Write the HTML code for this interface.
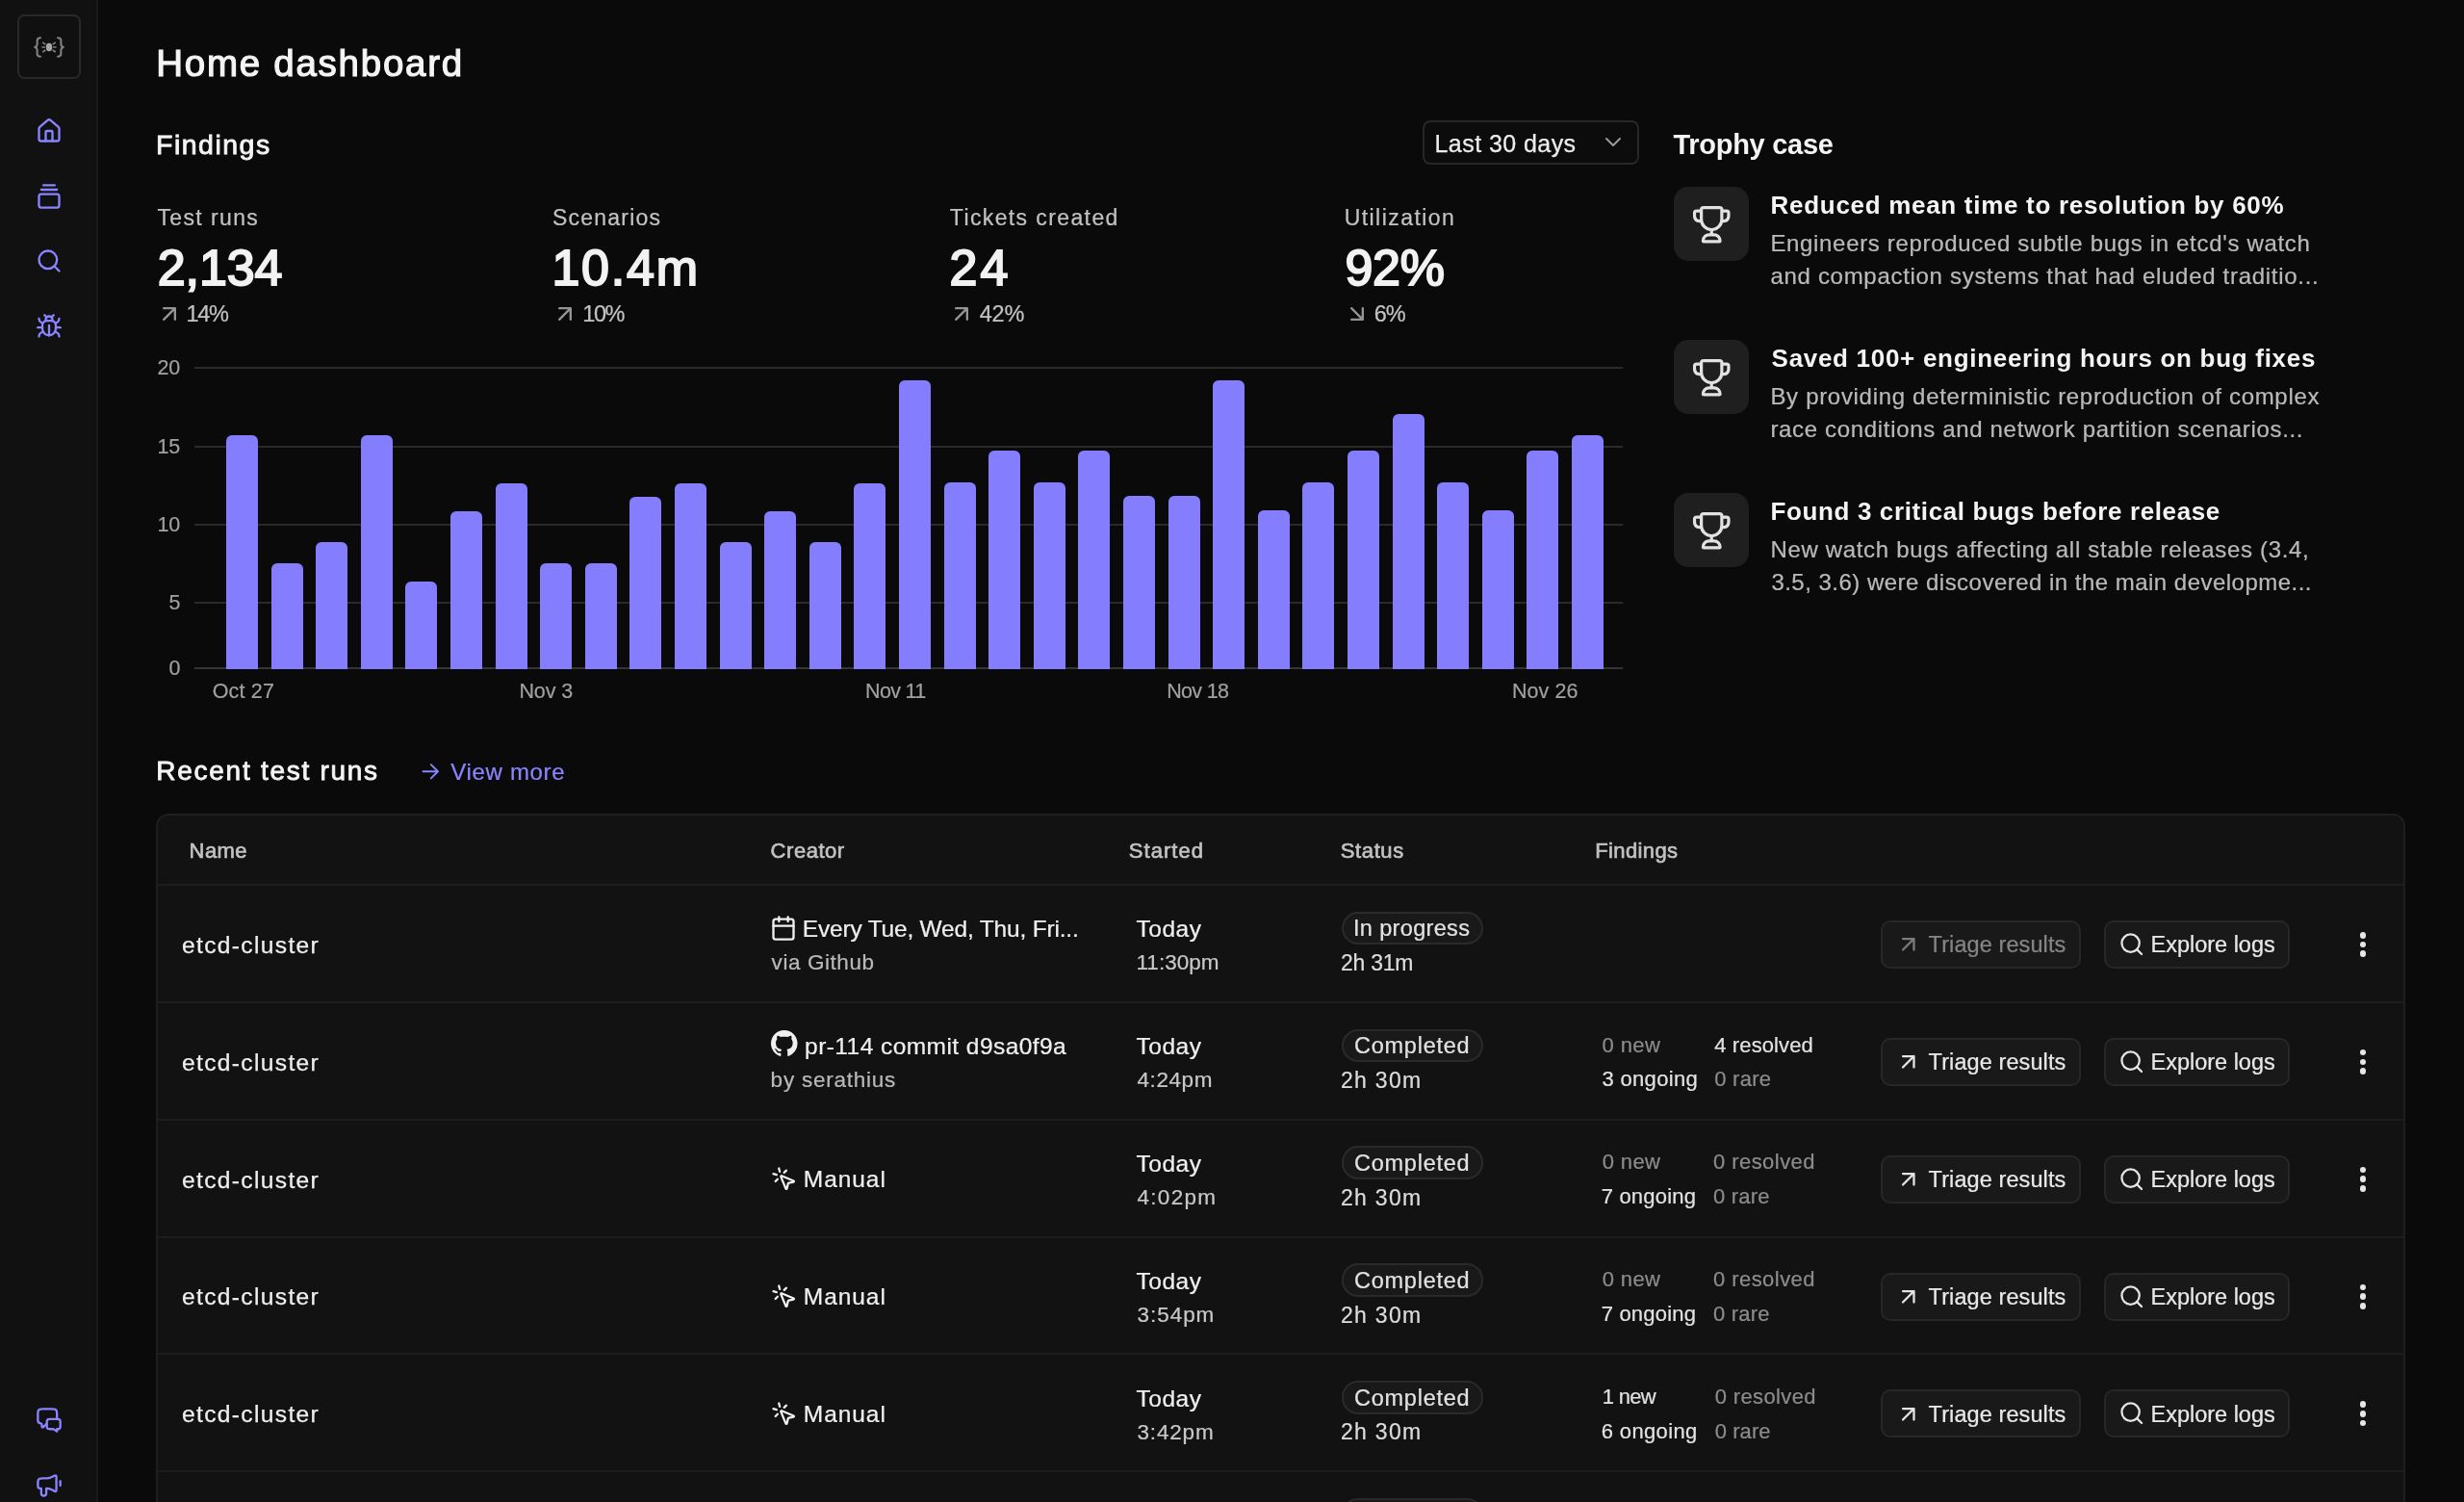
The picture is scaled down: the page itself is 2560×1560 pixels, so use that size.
<!DOCTYPE html>
<html lang="en"><head><meta charset="utf-8"><title>Home dashboard</title>
<style>
*{box-sizing:border-box;margin:0;padding:0}
html,body{width:2560px;height:1560px;overflow:hidden;background:#0a0a0a}
body{font-family:"Liberation Sans",sans-serif;position:relative;color:#f0f0f0}
.t{position:absolute;white-space:nowrap;font-weight:400}
.abs{position:absolute}
svg{position:absolute;overflow:visible}
.ic{fill:none;stroke-linecap:round;stroke-linejoin:round}
.side{position:absolute;left:0;top:0;width:102px;height:1560px;background:#111111;border-right:2px solid #191919}
.logo{position:absolute;left:18px;top:15px;width:66px;height:67px;border:2px solid #292929;border-radius:7.5px;background:#101010}
.dd{position:absolute;left:1478px;top:125px;width:225px;height:46px;border:2px solid #272727;border-radius:8px;background:#0c0c0c}
.tbox{position:absolute;left:1739px;width:77.5px;height:77px;border-radius:15px;background:#1f1f1f}
.table{position:absolute;left:162px;top:845px;width:2337px;height:760px;border:2px solid #1e1e1e;border-radius:13px;background:#121212}
.hr{position:absolute;left:164px;width:2333px;height:2px;background:#1d1d1d}
.pill{position:absolute;left:1393.5px;width:147px;height:34.5px;border:2px solid #2a2a2a;border-radius:17px;background:#191919}
.btn{position:absolute;height:50px;border:2px solid #272727;border-radius:10px;background:#191919}
.gl{position:absolute;left:202px;width:1484px;height:2px;background:#2a2a2a}
.bar{position:absolute;width:33px;background:#847dfe;border-radius:6px 6px 0 0}
</style></head><body><div id="root" style="position:absolute;left:0;top:0;width:2560px;height:1560px;will-change:transform">

<div class="side"></div><div class="logo"></div>
<svg style="left:34px;top:35.600px" width="34" height="26.440" viewBox="0 0 36 28" class="ic" stroke="#808080" stroke-width="2.2">
<path d="M8.5 3.5c-2.6 0-3.6 1-3.6 3.2v3.6c0 1.9-.8 3-2.6 3.5 1.8.5 2.6 1.6 2.6 3.5v3.6c0 2.2 1 3.2 3.6 3.2"/>
<path d="M27.5 3.5c2.6 0 3.6 1 3.6 3.2v3.6c0 1.9.8 3 2.6 3.5-1.8.5-2.6 1.6-2.6 3.5v3.6c0 2.2-1 3.2-3.6 3.2"/>
<ellipse cx="18" cy="13.8" rx="3.4" ry="4.6" fill="#a8a8a8" stroke="none"/>
<path d="M13.2 13.8h-2.6M22.8 13.8h2.6M13.6 10.4l-2.2-1.6M22.4 10.4l2.2-1.6M13.6 17.2l-2.2 1.6M22.4 17.2l2.2 1.6" stroke-width="1.7"/>
</svg>
<svg style="left:37.0px;top:122.0px" width="28" height="28" viewBox="0 0 24 24" class="ic" stroke="#8a84ff" stroke-width="2"><path d="M15 21v-8a1 1 0 0 0-1-1h-4a1 1 0 0 0-1 1v8"/><path d="M3 10a2 2 0 0 1 .709-1.528l7-5.999a2 2 0 0 1 2.582 0l7 5.999A2 2 0 0 1 21 10v9a2 2 0 0 1-2 2H5a2 2 0 0 1-2-2z"/></svg>
<svg style="left:37.0px;top:189.5px" width="28" height="28" viewBox="0 0 24 24" class="ic" stroke="#8a84ff" stroke-width="2"><path d="M7 2h10"/><path d="M5 6h14"/><rect width="18" height="12" x="3" y="10" rx="2"/></svg>
<svg style="left:37.0px;top:257.3px" width="28" height="28" viewBox="0 0 24 24" class="ic" stroke="#8a84ff" stroke-width="2"><circle cx="11" cy="11" r="8"/><path d="m21 21-4.3-4.3"/></svg>
<svg style="left:37.0px;top:324.8px" width="28" height="28" viewBox="0 0 24 24" class="ic" stroke="#8a84ff" stroke-width="2"><path d="m8 2 1.88 1.88"/><path d="M14.12 3.88 16 2"/><path d="M9 7.13v-1a3.003 3.003 0 1 1 6 0v1"/><path d="M12 20c-3.3 0-6-2.700-6-6v-3a4 4 0 0 1 4-4h4a4 4 0 0 1 4 4v3c0 3.300-2.700 6-6 6"/><path d="M12 20v-9"/><path d="M6.530 9C4.600 8.800 3 7.100 3 5"/><path d="M6 13H2"/><path d="M3 21c0-2.100 1.700-3.900 3.800-4"/><path d="M20.970 5c0 2.100-1.600 3.800-3.500 4"/><path d="M22 13h-4"/><path d="M17.200 17c2.100.1 3.800 1.900 3.800 4"/></svg>
<svg style="left:37.0px;top:1461.0px" width="28" height="28" viewBox="0 0 24 24" class="ic" stroke="#8a84ff" stroke-width="2"><path d="M10 15l-3.100 3.100c-.6.600-1.350.350-1.350-.550v-1.560c0-.550-.450-.950-.990-1.020A3 3 0 0 1 2 12V6.800C2 5.120 2 4.280 2.330 3.640a3 3 0 0 1 1.310-1.310C4.280 2 5.120 2 6.800 2h7.400c1.680 0 2.520 0 3.160.330a3 3 0 0 1 1.310 1.310C19 4.280 19 5.120 19 6.800V11"/><path d="M19 22l-2.180-1.510c-.300-.210-.460-.320-.620-.390a2 2 0 0 0-.460-.150c-.180-.030-.370-.030-.740-.030H13.200c-1.120 0-1.680 0-2.110-.220a2 2 0 0 1-.870-.870C10 18.390 10 17.830 10 16.710V14.200c0-1.120 0-1.680.220-2.110a2 2 0 0 1 .870-.870C11.520 11 12.080 11 13.200 11h5.600c1.120 0 1.680 0 2.110.220a2 2 0 0 1 .870.870c.220.430.220.990.220 2.110v2.710c0 .930 0 1.400-.150 1.770a2 2 0 0 1-1.080 1.080c-.370.150-.840.150-1.770.150V22z"/></svg>
<svg style="left:37.0px;top:1529.0px" width="28" height="28" viewBox="0 0 24 24" class="ic" stroke="#8a84ff" stroke-width="2"><path d="M22 8v4"/><path d="M10.250 5.500H6.800c-1.680 0-2.520 0-3.160.330a3 3 0 0 0-1.310 1.310C2 7.780 2 8.620 2 10.300v1.200c0 .930 0 1.400.150 1.770a2 2 0 0 0 1.080 1.080c.370.150.840.150 1.770.150v4.250c0 .230 0 .350.010.450a2 2 0 0 0 1.790 1.790c.100.010.220.010.450.010s.350 0 .450-.010a2 2 0 0 0 1.790-1.790c.010-.100.010-.220.010-.450V14.500h.750c1.770 0 3.930.950 5.600 1.860.970.530 1.460.800 1.780.760a.900.900 0 0 0 .700-.420c.170-.270.170-.810.170-1.890V5.190c0-1.080 0-1.620-.170-1.890a.900.900 0 0 0-.700-.420c-.320-.040-.810.230-1.780.760-1.670.910-3.830 1.860-5.600 1.860z"/></svg>
<div class="dd"></div>
<svg style="left:1664px;top:135.400px" width="24" height="24" viewBox="0 0 24 24" class="ic" stroke="#9a9a9a" stroke-width="2"><path d="M5 9l7 7 7-7"/></svg>
<svg style="left:162.0px;top:311.8px" width="28" height="28" viewBox="0 0 24 24" class="ic" stroke="#949494" stroke-width="2"><path d="M7 17L17 7M7 7h10v10"/></svg>
<svg style="left:573.4px;top:311.8px" width="28" height="28" viewBox="0 0 24 24" class="ic" stroke="#949494" stroke-width="2"><path d="M7 17L17 7M7 7h10v10"/></svg>
<svg style="left:984.6px;top:311.8px" width="28" height="28" viewBox="0 0 24 24" class="ic" stroke="#949494" stroke-width="2"><path d="M7 17L17 7M7 7h10v10"/></svg>
<svg style="left:1396.3px;top:311.8px" width="28" height="28" viewBox="0 0 24 24" class="ic" stroke="#949494" stroke-width="2"><path d="M7 7l10 10M17 7v10H7"/></svg>
<div class="gl" style="top:381.2px"></div>
<div class="gl" style="top:463.0px"></div>
<div class="gl" style="top:544.0px"></div>
<div class="gl" style="top:625.0px"></div>
<div class="gl" style="top:693px;background:#353535"></div>
<div class="bar" style="left:234.9px;top:452.4px;height:242.4px"></div>
<div class="bar" style="left:281.5px;top:585.1px;height:109.7px"></div>
<div class="bar" style="left:328.1px;top:562.9px;height:131.9px"></div>
<div class="bar" style="left:374.7px;top:452.4px;height:242.4px"></div>
<div class="bar" style="left:421.3px;top:603.6px;height:91.2px"></div>
<div class="bar" style="left:467.9px;top:530.5px;height:164.3px"></div>
<div class="bar" style="left:514.5px;top:501.8px;height:193.0px"></div>
<div class="bar" style="left:561.1px;top:585.1px;height:109.7px"></div>
<div class="bar" style="left:607.7px;top:585.1px;height:109.7px"></div>
<div class="bar" style="left:654.3px;top:515.7px;height:179.1px"></div>
<div class="bar" style="left:700.9px;top:501.8px;height:193.0px"></div>
<div class="bar" style="left:747.5px;top:562.9px;height:131.9px"></div>
<div class="bar" style="left:794.1px;top:530.5px;height:164.3px"></div>
<div class="bar" style="left:840.7px;top:562.9px;height:131.9px"></div>
<div class="bar" style="left:887.3px;top:501.8px;height:193.0px"></div>
<div class="bar" style="left:933.9px;top:394.8px;height:300.0px"></div>
<div class="bar" style="left:980.5px;top:501.3px;height:193.5px"></div>
<div class="bar" style="left:1027.1px;top:468.1px;height:226.7px"></div>
<div class="bar" style="left:1073.7px;top:501.3px;height:193.5px"></div>
<div class="bar" style="left:1120.3px;top:468.1px;height:226.7px"></div>
<div class="bar" style="left:1166.9px;top:515.2px;height:179.6px"></div>
<div class="bar" style="left:1213.5px;top:515.2px;height:179.6px"></div>
<div class="bar" style="left:1260.1px;top:394.8px;height:300.0px"></div>
<div class="bar" style="left:1306.7px;top:530.2px;height:164.6px"></div>
<div class="bar" style="left:1353.3px;top:501.3px;height:193.5px"></div>
<div class="bar" style="left:1399.9px;top:468.1px;height:226.7px"></div>
<div class="bar" style="left:1446.5px;top:430.4px;height:264.4px"></div>
<div class="bar" style="left:1493.1px;top:501.3px;height:193.5px"></div>
<div class="bar" style="left:1539.7px;top:530.2px;height:164.6px"></div>
<div class="bar" style="left:1586.3px;top:468.1px;height:226.7px"></div>
<div class="bar" style="left:1632.9px;top:452.4px;height:242.4px"></div>
<div class="tbox" style="top:194px"></div>
<svg style="left:1756.8px;top:211.7px" width="42.5" height="42.5" viewBox="0 0 24 24" class="ic" stroke="#e2e2e2" stroke-width="1.8"><path d="M12 15C8.686 15 6 12.314 6 9V3.444C6 3.031 6 2.824 6.060 2.658C6.161 2.380 6.380 2.161 6.658 2.060C6.824 2 7.031 2 7.444 2H16.556C16.969 2 17.176 2 17.342 2.060C17.620 2.161 17.839 2.380 17.940 2.658C18 2.824 18 3.031 18 3.444V9C18 12.314 15.314 15 12 15ZM12 15V18M18 4H20.500C20.966 4 21.199 4 21.383 4.076C21.628 4.178 21.822 4.372 21.924 4.617C22 4.801 22 5.034 22 5.500V6C22 6.930 22 7.395 21.898 7.776C21.620 8.812 20.812 9.620 19.776 9.898C19.395 10 18.930 10 18 10M6 4H3.500C3.034 4 2.801 4 2.617 4.076C2.372 4.178 2.178 4.372 2.076 4.617C2 4.801 2 5.034 2 5.500V6C2 6.930 2 7.395 2.102 7.776C2.380 8.812 3.188 9.620 4.224 9.898C4.605 10 5.070 10 6 10M7.444 22H16.556C16.801 22 17 21.801 17 21.556C17 19.592 15.408 18 13.444 18H10.556C8.592 18 7 19.592 7 21.556C7 21.801 7.199 22 7.444 22Z"/></svg>
<div class="tbox" style="top:353px"></div>
<svg style="left:1756.8px;top:370.6px" width="42.5" height="42.5" viewBox="0 0 24 24" class="ic" stroke="#e2e2e2" stroke-width="1.8"><path d="M12 15C8.686 15 6 12.314 6 9V3.444C6 3.031 6 2.824 6.060 2.658C6.161 2.380 6.380 2.161 6.658 2.060C6.824 2 7.031 2 7.444 2H16.556C16.969 2 17.176 2 17.342 2.060C17.620 2.161 17.839 2.380 17.940 2.658C18 2.824 18 3.031 18 3.444V9C18 12.314 15.314 15 12 15ZM12 15V18M18 4H20.500C20.966 4 21.199 4 21.383 4.076C21.628 4.178 21.822 4.372 21.924 4.617C22 4.801 22 5.034 22 5.500V6C22 6.930 22 7.395 21.898 7.776C21.620 8.812 20.812 9.620 19.776 9.898C19.395 10 18.930 10 18 10M6 4H3.500C3.034 4 2.801 4 2.617 4.076C2.372 4.178 2.178 4.372 2.076 4.617C2 4.801 2 5.034 2 5.500V6C2 6.930 2 7.395 2.102 7.776C2.380 8.812 3.188 9.620 4.224 9.898C4.605 10 5.070 10 6 10M7.444 22H16.556C16.801 22 17 21.801 17 21.556C17 19.592 15.408 18 13.444 18H10.556C8.592 18 7 19.592 7 21.556C7 21.801 7.199 22 7.444 22Z"/></svg>
<div class="tbox" style="top:512px"></div>
<svg style="left:1756.8px;top:529.6px" width="42.5" height="42.5" viewBox="0 0 24 24" class="ic" stroke="#e2e2e2" stroke-width="1.8"><path d="M12 15C8.686 15 6 12.314 6 9V3.444C6 3.031 6 2.824 6.060 2.658C6.161 2.380 6.380 2.161 6.658 2.060C6.824 2 7.031 2 7.444 2H16.556C16.969 2 17.176 2 17.342 2.060C17.620 2.161 17.839 2.380 17.940 2.658C18 2.824 18 3.031 18 3.444V9C18 12.314 15.314 15 12 15ZM12 15V18M18 4H20.500C20.966 4 21.199 4 21.383 4.076C21.628 4.178 21.822 4.372 21.924 4.617C22 4.801 22 5.034 22 5.500V6C22 6.930 22 7.395 21.898 7.776C21.620 8.812 20.812 9.620 19.776 9.898C19.395 10 18.930 10 18 10M6 4H3.500C3.034 4 2.801 4 2.617 4.076C2.372 4.178 2.178 4.372 2.076 4.617C2 4.801 2 5.034 2 5.500V6C2 6.930 2 7.395 2.102 7.776C2.380 8.812 3.188 9.620 4.224 9.898C4.605 10 5.070 10 6 10M7.444 22H16.556C16.801 22 17 21.801 17 21.556C17 19.592 15.408 18 13.444 18H10.556C8.592 18 7 19.592 7 21.556C7 21.801 7.199 22 7.444 22Z"/></svg>
<svg style="left:434.2px;top:787.9px" width="26.5" height="26.5" viewBox="0 0 24 24" class="ic" stroke="#8a84ff" stroke-width="1.7"><path d="M5 12h14M12.5 5.5L19 12l-6.5 6.5"/></svg>
<div class="table"></div>
<div class="hr" style="top:918px"></div>
<div class="hr" style="top:1039.8px"></div>
<div class="hr" style="top:1161.7px"></div>
<div class="hr" style="top:1283.5px"></div>
<div class="hr" style="top:1405.4px"></div>
<div class="hr" style="top:1527.2px"></div>
<svg style="left:800.4px;top:950.3px" width="28" height="28" viewBox="0 0 24 24" class="ic" stroke="#f0f0f0" stroke-width="2"><rect x="3" y="4" width="18" height="18" rx="2"/><path d="M3 10h18M8 2v4M16 2v4"/></svg>
<div class="pill" style="top:946.6px"></div>
<div class="btn" style="left:1954px;top:956.0px;width:208px"></div>
<div class="btn" style="left:2186px;top:956.0px;width:192.500px"></div>
<svg style="left:1969.0px;top:967.2px" width="27.5" height="27.5" viewBox="0 0 24 24" class="ic" stroke="#7c7c7c" stroke-width="2"><path d="M7 17L17 7M7 7h10v10"/></svg>
<svg style="left:2200.8px;top:967.0px" width="27.5" height="27.5" viewBox="0 0 24 24" class="ic" stroke="#e4e4e4" stroke-width="2"><circle cx="11" cy="11" r="8"/><path d="m21 21-4.3-4.3"/></svg>
<div class="abs" style="left:2451.7px;top:968.0px;width:6.600px;height:6.600px;border-radius:50%;background:#e6e6e6"></div>
<div class="abs" style="left:2451.7px;top:977.7px;width:6.600px;height:6.600px;border-radius:50%;background:#e6e6e6"></div>
<div class="abs" style="left:2451.7px;top:987.4px;width:6.600px;height:6.600px;border-radius:50%;background:#e6e6e6"></div>
<svg style="left:800.7px;top:1070.3px" width="27.6" height="27.6" viewBox="0 0 16 16"><path fill="#f0f0f0" stroke="none" d="M8 0C3.580 0 0 3.580 0 8c0 3.540 2.290 6.530 5.470 7.590.400.070.550-.170.550-.380 0-.190-.010-.820-.010-1.490-2.010.370-2.530-.490-2.690-.940-.090-.230-.480-.940-.820-1.130-.280-.150-.680-.520-.010-.530.630-.010 1.080.580 1.230.820.720 1.210 1.870.870 2.330.660.070-.520.280-.870.510-1.070-1.780-.200-3.640-.890-3.640-3.950 0-.870.310-1.590.820-2.150-.080-.200-.360-1.020.080-2.120 0 0 .670-.210 2.200.820.640-.180 1.320-.270 2-.270.680 0 1.360.090 2 .270 1.530-1.040 2.200-.820 2.200-.820.440 1.100.160 1.920.080 2.120.510.560.820 1.270.820 2.150 0 3.070-1.870 3.750-3.650 3.950.290.250.540.730.540 1.480 0 1.070-.010 1.930-.010 2.200 0 .210.150.460.550.380A8.013 8.013 0 0 0 16 8c0-4.420-3.580-8-8-8z"/></svg>
<div class="pill" style="top:1068.5px"></div>
<div class="btn" style="left:1954px;top:1077.85px;width:208px"></div>
<div class="btn" style="left:2186px;top:1077.85px;width:192.500px"></div>
<svg style="left:1969.0px;top:1089.1px" width="27.5" height="27.5" viewBox="0 0 24 24" class="ic" stroke="#e4e4e4" stroke-width="2"><path d="M7 17L17 7M7 7h10v10"/></svg>
<svg style="left:2200.8px;top:1088.9px" width="27.5" height="27.5" viewBox="0 0 24 24" class="ic" stroke="#e4e4e4" stroke-width="2"><circle cx="11" cy="11" r="8"/><path d="m21 21-4.3-4.3"/></svg>
<div class="abs" style="left:2451.7px;top:1089.8px;width:6.600px;height:6.600px;border-radius:50%;background:#e6e6e6"></div>
<div class="abs" style="left:2451.7px;top:1099.5px;width:6.600px;height:6.600px;border-radius:50%;background:#e6e6e6"></div>
<div class="abs" style="left:2451.7px;top:1109.2px;width:6.600px;height:6.600px;border-radius:50%;background:#e6e6e6"></div>
<svg style="left:800.9px;top:1210.8px" width="27.4" height="27.4" viewBox="0 0 24 24" class="ic" stroke="#f0f0f0" stroke-width="2"><path d="M14 4.1 12 6"/><path d="m5.1 8-2.9-.8"/><path d="m6 12-1.9 2"/><path d="M7.2 2.2 8 5.1"/><path d="M9.037 9.69a.498.498 0 0 1 .653-.653l11 4.5a.5.5 0 0 1-.074.949l-4.349 1.041a1 1 0 0 0-.74.739l-1.04 4.35a.5.5 0 0 1-.95.074z"/></svg>
<div class="pill" style="top:1190.3px"></div>
<div class="btn" style="left:1954px;top:1199.7px;width:208px"></div>
<div class="btn" style="left:2186px;top:1199.7px;width:192.500px"></div>
<svg style="left:1969.0px;top:1211.0px" width="27.5" height="27.5" viewBox="0 0 24 24" class="ic" stroke="#e4e4e4" stroke-width="2"><path d="M7 17L17 7M7 7h10v10"/></svg>
<svg style="left:2200.8px;top:1210.8px" width="27.5" height="27.5" viewBox="0 0 24 24" class="ic" stroke="#e4e4e4" stroke-width="2"><circle cx="11" cy="11" r="8"/><path d="m21 21-4.3-4.3"/></svg>
<div class="abs" style="left:2451.7px;top:1211.7px;width:6.600px;height:6.600px;border-radius:50%;background:#e6e6e6"></div>
<div class="abs" style="left:2451.7px;top:1221.4px;width:6.600px;height:6.600px;border-radius:50%;background:#e6e6e6"></div>
<div class="abs" style="left:2451.7px;top:1231.1px;width:6.600px;height:6.600px;border-radius:50%;background:#e6e6e6"></div>
<svg style="left:800.9px;top:1332.6px" width="27.4" height="27.4" viewBox="0 0 24 24" class="ic" stroke="#f0f0f0" stroke-width="2"><path d="M14 4.1 12 6"/><path d="m5.1 8-2.9-.8"/><path d="m6 12-1.9 2"/><path d="M7.2 2.2 8 5.1"/><path d="M9.037 9.69a.498.498 0 0 1 .653-.653l11 4.5a.5.5 0 0 1-.074.949l-4.349 1.041a1 1 0 0 0-.74.739l-1.04 4.35a.5.5 0 0 1-.95.074z"/></svg>
<div class="pill" style="top:1312.2px"></div>
<div class="btn" style="left:1954px;top:1321.55px;width:208px"></div>
<div class="btn" style="left:2186px;top:1321.55px;width:192.500px"></div>
<svg style="left:1969.0px;top:1332.8px" width="27.5" height="27.5" viewBox="0 0 24 24" class="ic" stroke="#e4e4e4" stroke-width="2"><path d="M7 17L17 7M7 7h10v10"/></svg>
<svg style="left:2200.8px;top:1332.6px" width="27.5" height="27.5" viewBox="0 0 24 24" class="ic" stroke="#e4e4e4" stroke-width="2"><circle cx="11" cy="11" r="8"/><path d="m21 21-4.3-4.3"/></svg>
<div class="abs" style="left:2451.7px;top:1333.5px;width:6.600px;height:6.600px;border-radius:50%;background:#e6e6e6"></div>
<div class="abs" style="left:2451.7px;top:1343.2px;width:6.600px;height:6.600px;border-radius:50%;background:#e6e6e6"></div>
<div class="abs" style="left:2451.7px;top:1353.0px;width:6.600px;height:6.600px;border-radius:50%;background:#e6e6e6"></div>
<svg style="left:800.9px;top:1454.5px" width="27.4" height="27.4" viewBox="0 0 24 24" class="ic" stroke="#f0f0f0" stroke-width="2"><path d="M14 4.1 12 6"/><path d="m5.1 8-2.9-.8"/><path d="m6 12-1.9 2"/><path d="M7.2 2.2 8 5.1"/><path d="M9.037 9.69a.498.498 0 0 1 .653-.653l11 4.5a.5.5 0 0 1-.074.949l-4.349 1.041a1 1 0 0 0-.74.739l-1.04 4.35a.5.5 0 0 1-.95.074z"/></svg>
<div class="pill" style="top:1434.0px"></div>
<div class="btn" style="left:1954px;top:1443.4px;width:208px"></div>
<div class="btn" style="left:2186px;top:1443.4px;width:192.500px"></div>
<svg style="left:1969.0px;top:1454.7px" width="27.5" height="27.5" viewBox="0 0 24 24" class="ic" stroke="#e4e4e4" stroke-width="2"><path d="M7 17L17 7M7 7h10v10"/></svg>
<svg style="left:2200.8px;top:1454.4px" width="27.5" height="27.5" viewBox="0 0 24 24" class="ic" stroke="#e4e4e4" stroke-width="2"><circle cx="11" cy="11" r="8"/><path d="m21 21-4.3-4.3"/></svg>
<div class="abs" style="left:2451.7px;top:1455.4px;width:6.600px;height:6.600px;border-radius:50%;background:#e6e6e6"></div>
<div class="abs" style="left:2451.7px;top:1465.1px;width:6.600px;height:6.600px;border-radius:50%;background:#e6e6e6"></div>
<div class="abs" style="left:2451.7px;top:1474.8px;width:6.600px;height:6.600px;border-radius:50%;background:#e6e6e6"></div>
<svg style="left:800.9px;top:1576.3px" width="27.4" height="27.4" viewBox="0 0 24 24" class="ic" stroke="#f0f0f0" stroke-width="2"><path d="M14 4.1 12 6"/><path d="m5.1 8-2.9-.8"/><path d="m6 12-1.9 2"/><path d="M7.2 2.2 8 5.1"/><path d="M9.037 9.69a.498.498 0 0 1 .653-.653l11 4.5a.5.5 0 0 1-.074.949l-4.349 1.041a1 1 0 0 0-.74.739l-1.04 4.35a.5.5 0 0 1-.95.074z"/></svg>
<div class="pill" style="top:1555.8px"></div>
<div class="btn" style="left:1954px;top:1565.25px;width:208px"></div>
<div class="btn" style="left:2186px;top:1565.25px;width:192.500px"></div>
<svg style="left:1969.0px;top:1576.5px" width="27.5" height="27.5" viewBox="0 0 24 24" class="ic" stroke="#e4e4e4" stroke-width="2"><path d="M7 17L17 7M7 7h10v10"/></svg>
<svg style="left:2200.8px;top:1576.3px" width="27.5" height="27.5" viewBox="0 0 24 24" class="ic" stroke="#e4e4e4" stroke-width="2"><circle cx="11" cy="11" r="8"/><path d="m21 21-4.3-4.3"/></svg>
<div class="abs" style="left:2451.7px;top:1577.2px;width:6.600px;height:6.600px;border-radius:50%;background:#e6e6e6"></div>
<div class="abs" style="left:2451.7px;top:1587.0px;width:6.600px;height:6.600px;border-radius:50%;background:#e6e6e6"></div>
<div class="abs" style="left:2451.7px;top:1596.7px;width:6.600px;height:6.600px;border-radius:50%;background:#e6e6e6"></div>
<div class="t" style="left:162.2px;top:41.5px;font-size:38.5px;line-height:48px;letter-spacing:1.74px;color:#f4f4f4;-webkit-text-stroke:1.16px #f4f4f4;">Home dashboard</div>
<div class="t" style="left:162.0px;top:132.0px;font-size:28.5px;line-height:36px;letter-spacing:1.50px;color:#f4f4f4;-webkit-text-stroke:0.85px #f4f4f4;">Findings</div>
<div class="t" style="left:1490.5px;top:133.5px;font-size:25.0px;line-height:31px;letter-spacing:0.44px;color:#ededed;-webkit-text-stroke:0.25px #ededed;">Last 30 days</div>
<div class="t" style="font-weight:700;left:1738.5px;top:132.0px;font-size:29.0px;line-height:36px;letter-spacing:-0.29px;color:#f4f4f4;">Trophy case</div>
<div class="t" style="left:163.4px;top:211.5px;font-size:23.0px;line-height:29px;letter-spacing:1.39px;color:#c2c2c2;-webkit-text-stroke:0.23px #c2c2c2;">Test runs</div>
<div class="t" style="left:574.0px;top:211.5px;font-size:23.0px;line-height:29px;letter-spacing:1.22px;color:#c2c2c2;-webkit-text-stroke:0.23px #c2c2c2;">Scenarios</div>
<div class="t" style="left:986.8px;top:211.5px;font-size:23.0px;line-height:29px;letter-spacing:1.39px;color:#c2c2c2;-webkit-text-stroke:0.23px #c2c2c2;">Tickets created</div>
<div class="t" style="left:1396.7px;top:211.5px;font-size:23.0px;line-height:29px;letter-spacing:1.44px;color:#c2c2c2;-webkit-text-stroke:0.23px #c2c2c2;">Utilization</div>
<div class="t" style="left:163.7px;top:245.5px;font-size:52px;line-height:65px;letter-spacing:-0.08px;color:#f2f2f2;-webkit-text-stroke:1.98px #f2f2f2;">2,134</div>
<div class="t" style="left:573.4px;top:245.5px;font-size:52px;line-height:65px;letter-spacing:1.77px;color:#f2f2f2;-webkit-text-stroke:1.98px #f2f2f2;">10.4m</div>
<div class="t" style="left:986.4px;top:245.5px;font-size:52px;line-height:65px;letter-spacing:3.18px;color:#f2f2f2;-webkit-text-stroke:1.98px #f2f2f2;">24</div>
<div class="t" style="left:1397.4px;top:245.5px;font-size:52px;line-height:65px;letter-spacing:-0.27px;color:#f2f2f2;-webkit-text-stroke:1.98px #f2f2f2;">92%</div>
<div class="t" style="left:193.5px;top:311.5px;font-size:23.5px;line-height:29px;letter-spacing:-1.32px;color:#c2c2c2;-webkit-text-stroke:0.24px #c2c2c2;">14%</div>
<div class="t" style="left:605.2px;top:311.5px;font-size:23.5px;line-height:29px;letter-spacing:-1.37px;color:#c2c2c2;-webkit-text-stroke:0.24px #c2c2c2;">10%</div>
<div class="t" style="left:1017.7px;top:311.5px;font-size:23.5px;line-height:29px;letter-spacing:-0.22px;color:#c2c2c2;-webkit-text-stroke:0.24px #c2c2c2;">42%</div>
<div class="t" style="left:1427.8px;top:311.5px;font-size:23.5px;line-height:29px;letter-spacing:-1.07px;color:#c2c2c2;-webkit-text-stroke:0.24px #c2c2c2;">6%</div>
<div class="t" style="left:163.4px;top:368.5px;font-size:21.5px;line-height:27px;letter-spacing:0.00px;color:#a0a0a0;-webkit-text-stroke:0.21px #a0a0a0;">20</div>
<div class="t" style="left:163.4px;top:450.5px;font-size:21.5px;line-height:27px;letter-spacing:0.00px;color:#a0a0a0;-webkit-text-stroke:0.21px #a0a0a0;">15</div>
<div class="t" style="left:163.4px;top:531.5px;font-size:21.5px;line-height:27px;letter-spacing:0.00px;color:#a0a0a0;-webkit-text-stroke:0.21px #a0a0a0;">10</div>
<div class="t" style="left:175.4px;top:612.5px;font-size:21.5px;line-height:27px;letter-spacing:0.00px;color:#a0a0a0;-webkit-text-stroke:0.21px #a0a0a0;">5</div>
<div class="t" style="left:175.4px;top:680.5px;font-size:21.5px;line-height:27px;letter-spacing:0.00px;color:#a0a0a0;-webkit-text-stroke:0.21px #a0a0a0;">0</div>
<div class="t" style="left:220.7px;top:704.5px;font-size:21.5px;line-height:27px;letter-spacing:0.18px;color:#a0a0a0;-webkit-text-stroke:0.21px #a0a0a0;">Oct 27</div>
<div class="t" style="left:539.4px;top:704.5px;font-size:21.5px;line-height:27px;letter-spacing:-0.08px;color:#a0a0a0;-webkit-text-stroke:0.21px #a0a0a0;">Nov 3</div>
<div class="t" style="left:899.1px;top:704.5px;font-size:21.5px;line-height:27px;letter-spacing:-0.69px;color:#a0a0a0;-webkit-text-stroke:0.21px #a0a0a0;">Nov 11</div>
<div class="t" style="left:1212.2px;top:704.5px;font-size:21.5px;line-height:27px;letter-spacing:-0.65px;color:#a0a0a0;-webkit-text-stroke:0.21px #a0a0a0;">Nov 18</div>
<div class="t" style="left:1571.0px;top:704.5px;font-size:21.5px;line-height:27px;letter-spacing:0.05px;color:#a0a0a0;-webkit-text-stroke:0.21px #a0a0a0;">Nov 26</div>
<div class="t" style="font-weight:700;left:1839.6px;top:197.0px;font-size:26.0px;line-height:32px;letter-spacing:0.70px;color:#f4f4f4;">Reduced mean time to resolution by 60%</div>
<div class="t" style="left:1839.4px;top:237.5px;font-size:24.0px;line-height:30px;letter-spacing:0.67px;color:#b9b9b9;-webkit-text-stroke:0.24px #b9b9b9;">Engineers reproduced subtle bugs in etcd's watch</div>
<div class="t" style="left:1839.4px;top:271.5px;font-size:24.0px;line-height:30px;letter-spacing:0.70px;color:#b9b9b9;-webkit-text-stroke:0.24px #b9b9b9;">and compaction systems that had eluded traditio...</div>
<div class="t" style="font-weight:700;left:1840.6px;top:356.0px;font-size:26.0px;line-height:32px;letter-spacing:0.70px;color:#f4f4f4;">Saved 100+ engineering hours on bug fixes</div>
<div class="t" style="left:1839.4px;top:396.5px;font-size:24.0px;line-height:30px;letter-spacing:0.69px;color:#b9b9b9;-webkit-text-stroke:0.24px #b9b9b9;">By providing deterministic reproduction of complex</div>
<div class="t" style="left:1839.4px;top:430.5px;font-size:24.0px;line-height:30px;letter-spacing:0.67px;color:#b9b9b9;-webkit-text-stroke:0.24px #b9b9b9;">race conditions and network partition scenarios...</div>
<div class="t" style="font-weight:700;left:1839.6px;top:515.0px;font-size:26.0px;line-height:32px;letter-spacing:0.62px;color:#f4f4f4;">Found 3 critical bugs before release</div>
<div class="t" style="left:1839.4px;top:555.5px;font-size:24.0px;line-height:30px;letter-spacing:0.67px;color:#b9b9b9;-webkit-text-stroke:0.24px #b9b9b9;">New watch bugs affecting all stable releases (3.4,</div>
<div class="t" style="left:1840.4px;top:589.5px;font-size:24.0px;line-height:30px;letter-spacing:0.48px;color:#b9b9b9;-webkit-text-stroke:0.24px #b9b9b9;">3.5, 3.6) were discovered in the main developme...</div>
<div class="t" style="left:162.3px;top:783.0px;font-size:28.0px;line-height:35px;letter-spacing:1.73px;color:#f4f4f4;-webkit-text-stroke:0.84px #f4f4f4;">Recent test runs</div>
<div class="t" style="left:468.2px;top:786.5px;font-size:24.0px;line-height:30px;letter-spacing:0.69px;color:#8a84ff;-webkit-text-stroke:0.24px #8a84ff;">View more</div>
<div class="t" style="left:196.6px;top:869.5px;font-size:22.0px;line-height:28px;letter-spacing:0.42px;color:#c2c2c2;-webkit-text-stroke:0.66px #c2c2c2;">Name</div>
<div class="t" style="left:800.6px;top:869.5px;font-size:22.0px;line-height:28px;letter-spacing:0.54px;color:#c2c2c2;-webkit-text-stroke:0.66px #c2c2c2;">Creator</div>
<div class="t" style="left:1172.8px;top:869.5px;font-size:22.0px;line-height:28px;letter-spacing:1.05px;color:#c2c2c2;-webkit-text-stroke:0.66px #c2c2c2;">Started</div>
<div class="t" style="left:1392.8px;top:869.5px;font-size:22.0px;line-height:28px;letter-spacing:0.61px;color:#c2c2c2;-webkit-text-stroke:0.66px #c2c2c2;">Status</div>
<div class="t" style="left:1657.2px;top:869.5px;font-size:22.0px;line-height:28px;letter-spacing:0.39px;color:#c2c2c2;-webkit-text-stroke:0.66px #c2c2c2;">Findings</div>
<div class="t" style="left:189.0px;top:966.0px;font-size:24.6px;line-height:31px;letter-spacing:1.33px;color:#efefef;-webkit-text-stroke:0.25px #efefef;">etcd-cluster</div>
<div class="t" style="left:833.8px;top:949.0px;font-size:24.5px;line-height:31px;letter-spacing:-0.19px;color:#efefef;-webkit-text-stroke:0.24px #efefef;">Every Tue, Wed, Thu, Fri...</div>
<div class="t" style="left:801.6px;top:985.5px;font-size:22.5px;line-height:28px;letter-spacing:0.57px;color:#b9b9b9;-webkit-text-stroke:0.23px #b9b9b9;">via Github</div>
<div class="t" style="left:1180.4px;top:949.0px;font-size:24.5px;line-height:31px;letter-spacing:0.57px;color:#efefef;-webkit-text-stroke:0.24px #efefef;">Today</div>
<div class="t" style="left:1180.5px;top:985.5px;font-size:22.5px;line-height:28px;letter-spacing:0.01px;color:#c8c8c8;-webkit-text-stroke:0.23px #c8c8c8;">11:30pm</div>
<div class="t" style="left:1406.0px;top:949.5px;font-size:23.5px;line-height:29px;letter-spacing:0.34px;color:#e2e2e2;-webkit-text-stroke:0.24px #e2e2e2;">In progress</div>
<div class="t" style="left:1392.9px;top:985.5px;font-size:23.0px;line-height:29px;letter-spacing:-0.23px;color:#dcdcdc;-webkit-text-stroke:0.23px #dcdcdc;">2h 31m</div>
<div class="t" style="left:2003.6px;top:966.5px;font-size:23.5px;line-height:29px;letter-spacing:0.09px;color:#858585;-webkit-text-stroke:0.24px #858585;">Triage results</div>
<div class="t" style="left:2234.6px;top:966.5px;font-size:23.5px;line-height:29px;letter-spacing:-0.02px;color:#e8e8e8;-webkit-text-stroke:0.24px #e8e8e8;">Explore logs</div>
<div class="t" style="left:189.0px;top:1088.0px;font-size:24.6px;line-height:31px;letter-spacing:1.33px;color:#efefef;-webkit-text-stroke:0.25px #efefef;">etcd-cluster</div>
<div class="t" style="left:836.1px;top:1071.0px;font-size:24.5px;line-height:31px;letter-spacing:0.44px;color:#efefef;-webkit-text-stroke:0.24px #efefef;">pr-114 commit d9sa0f9a</div>
<div class="t" style="left:800.6px;top:1107.5px;font-size:22.5px;line-height:28px;letter-spacing:0.77px;color:#b9b9b9;-webkit-text-stroke:0.23px #b9b9b9;">by serathius</div>
<div class="t" style="left:1180.4px;top:1071.0px;font-size:24.5px;line-height:31px;letter-spacing:0.57px;color:#efefef;-webkit-text-stroke:0.24px #efefef;">Today</div>
<div class="t" style="left:1181.5px;top:1107.5px;font-size:22.5px;line-height:28px;letter-spacing:0.58px;color:#c8c8c8;-webkit-text-stroke:0.23px #c8c8c8;">4:24pm</div>
<div class="t" style="left:1407.0px;top:1071.5px;font-size:23.5px;line-height:29px;letter-spacing:0.75px;color:#e2e2e2;-webkit-text-stroke:0.24px #e2e2e2;">Completed</div>
<div class="t" style="left:1392.9px;top:1107.5px;font-size:23.0px;line-height:29px;letter-spacing:1.31px;color:#dcdcdc;-webkit-text-stroke:0.23px #dcdcdc;">2h 30m</div>
<div class="t" style="left:1664.4px;top:1071.5px;font-size:22.0px;line-height:28px;letter-spacing:0.45px;color:#8c8c8c;-webkit-text-stroke:0.22px #8c8c8c;">0 new</div>
<div class="t" style="left:1781.3px;top:1071.5px;font-size:22.0px;line-height:28px;letter-spacing:0.11px;color:#e2e2e2;-webkit-text-stroke:0.22px #e2e2e2;">4 resolved</div>
<div class="t" style="left:1664.4px;top:1106.5px;font-size:22.0px;line-height:28px;letter-spacing:0.35px;color:#e2e2e2;-webkit-text-stroke:0.22px #e2e2e2;">3 ongoing</div>
<div class="t" style="left:1781.3px;top:1106.5px;font-size:22.0px;line-height:28px;letter-spacing:0.23px;color:#8c8c8c;-webkit-text-stroke:0.22px #8c8c8c;">0 rare</div>
<div class="t" style="left:2003.6px;top:1088.5px;font-size:23.5px;line-height:29px;letter-spacing:0.09px;color:#e8e8e8;-webkit-text-stroke:0.24px #e8e8e8;">Triage results</div>
<div class="t" style="left:2234.6px;top:1088.5px;font-size:23.5px;line-height:29px;letter-spacing:-0.02px;color:#e8e8e8;-webkit-text-stroke:0.24px #e8e8e8;">Explore logs</div>
<div class="t" style="left:189.0px;top:1210.0px;font-size:24.6px;line-height:31px;letter-spacing:1.33px;color:#efefef;-webkit-text-stroke:0.25px #efefef;">etcd-cluster</div>
<div class="t" style="left:834.8px;top:1209.0px;font-size:24.5px;line-height:31px;letter-spacing:0.94px;color:#efefef;-webkit-text-stroke:0.24px #efefef;">Manual</div>
<div class="t" style="left:1180.4px;top:1193.0px;font-size:24.5px;line-height:31px;letter-spacing:0.57px;color:#efefef;-webkit-text-stroke:0.24px #efefef;">Today</div>
<div class="t" style="left:1181.5px;top:1229.5px;font-size:22.5px;line-height:28px;letter-spacing:1.30px;color:#c8c8c8;-webkit-text-stroke:0.23px #c8c8c8;">4:02pm</div>
<div class="t" style="left:1407.0px;top:1193.5px;font-size:23.5px;line-height:29px;letter-spacing:0.75px;color:#e2e2e2;-webkit-text-stroke:0.24px #e2e2e2;">Completed</div>
<div class="t" style="left:1392.9px;top:1229.5px;font-size:23.0px;line-height:29px;letter-spacing:1.31px;color:#dcdcdc;-webkit-text-stroke:0.23px #dcdcdc;">2h 30m</div>
<div class="t" style="left:1664.7px;top:1192.5px;font-size:22.0px;line-height:28px;letter-spacing:0.37px;color:#8c8c8c;-webkit-text-stroke:0.22px #8c8c8c;">0 new</div>
<div class="t" style="left:1779.9px;top:1192.5px;font-size:22.0px;line-height:28px;letter-spacing:0.46px;color:#8c8c8c;-webkit-text-stroke:0.22px #8c8c8c;">0 resolved</div>
<div class="t" style="left:1663.7px;top:1228.5px;font-size:22.0px;line-height:28px;letter-spacing:0.20px;color:#e2e2e2;-webkit-text-stroke:0.22px #e2e2e2;">7 ongoing</div>
<div class="t" style="left:1779.9px;top:1228.5px;font-size:22.0px;line-height:28px;letter-spacing:0.21px;color:#8c8c8c;-webkit-text-stroke:0.22px #8c8c8c;">0 rare</div>
<div class="t" style="left:2003.6px;top:1210.5px;font-size:23.5px;line-height:29px;letter-spacing:0.09px;color:#e8e8e8;-webkit-text-stroke:0.24px #e8e8e8;">Triage results</div>
<div class="t" style="left:2234.6px;top:1210.5px;font-size:23.5px;line-height:29px;letter-spacing:-0.02px;color:#e8e8e8;-webkit-text-stroke:0.24px #e8e8e8;">Explore logs</div>
<div class="t" style="left:189.0px;top:1331.0px;font-size:24.6px;line-height:31px;letter-spacing:1.33px;color:#efefef;-webkit-text-stroke:0.25px #efefef;">etcd-cluster</div>
<div class="t" style="left:834.8px;top:1331.0px;font-size:24.5px;line-height:31px;letter-spacing:0.94px;color:#efefef;-webkit-text-stroke:0.24px #efefef;">Manual</div>
<div class="t" style="left:1180.4px;top:1315.0px;font-size:24.5px;line-height:31px;letter-spacing:0.57px;color:#efefef;-webkit-text-stroke:0.24px #efefef;">Today</div>
<div class="t" style="left:1181.5px;top:1351.5px;font-size:22.5px;line-height:28px;letter-spacing:0.96px;color:#c8c8c8;-webkit-text-stroke:0.23px #c8c8c8;">3:54pm</div>
<div class="t" style="left:1407.0px;top:1315.5px;font-size:23.5px;line-height:29px;letter-spacing:0.75px;color:#e2e2e2;-webkit-text-stroke:0.24px #e2e2e2;">Completed</div>
<div class="t" style="left:1392.9px;top:1351.5px;font-size:23.0px;line-height:29px;letter-spacing:1.31px;color:#dcdcdc;-webkit-text-stroke:0.23px #dcdcdc;">2h 30m</div>
<div class="t" style="left:1664.7px;top:1314.5px;font-size:22.0px;line-height:28px;letter-spacing:0.37px;color:#8c8c8c;-webkit-text-stroke:0.22px #8c8c8c;">0 new</div>
<div class="t" style="left:1779.9px;top:1314.5px;font-size:22.0px;line-height:28px;letter-spacing:0.46px;color:#8c8c8c;-webkit-text-stroke:0.22px #8c8c8c;">0 resolved</div>
<div class="t" style="left:1663.7px;top:1350.5px;font-size:22.0px;line-height:28px;letter-spacing:0.20px;color:#e2e2e2;-webkit-text-stroke:0.22px #e2e2e2;">7 ongoing</div>
<div class="t" style="left:1779.9px;top:1350.5px;font-size:22.0px;line-height:28px;letter-spacing:0.21px;color:#8c8c8c;-webkit-text-stroke:0.22px #8c8c8c;">0 rare</div>
<div class="t" style="left:2003.6px;top:1332.5px;font-size:23.5px;line-height:29px;letter-spacing:0.09px;color:#e8e8e8;-webkit-text-stroke:0.24px #e8e8e8;">Triage results</div>
<div class="t" style="left:2234.6px;top:1332.5px;font-size:23.5px;line-height:29px;letter-spacing:-0.02px;color:#e8e8e8;-webkit-text-stroke:0.24px #e8e8e8;">Explore logs</div>
<div class="t" style="left:189.0px;top:1453.0px;font-size:24.6px;line-height:31px;letter-spacing:1.33px;color:#efefef;-webkit-text-stroke:0.25px #efefef;">etcd-cluster</div>
<div class="t" style="left:834.8px;top:1453.0px;font-size:24.5px;line-height:31px;letter-spacing:0.94px;color:#efefef;-webkit-text-stroke:0.24px #efefef;">Manual</div>
<div class="t" style="left:1180.4px;top:1437.0px;font-size:24.5px;line-height:31px;letter-spacing:0.57px;color:#efefef;-webkit-text-stroke:0.24px #efefef;">Today</div>
<div class="t" style="left:1181.5px;top:1473.5px;font-size:22.5px;line-height:28px;letter-spacing:0.82px;color:#c8c8c8;-webkit-text-stroke:0.23px #c8c8c8;">3:42pm</div>
<div class="t" style="left:1407.0px;top:1437.5px;font-size:23.5px;line-height:29px;letter-spacing:0.75px;color:#e2e2e2;-webkit-text-stroke:0.24px #e2e2e2;">Completed</div>
<div class="t" style="left:1392.9px;top:1472.5px;font-size:23.0px;line-height:29px;letter-spacing:1.31px;color:#dcdcdc;-webkit-text-stroke:0.23px #dcdcdc;">2h 30m</div>
<div class="t" style="left:1664.8px;top:1436.5px;font-size:22.0px;line-height:28px;letter-spacing:-0.70px;color:#e2e2e2;-webkit-text-stroke:0.22px #e2e2e2;">1 new</div>
<div class="t" style="left:1781.7px;top:1436.5px;font-size:22.0px;line-height:28px;letter-spacing:0.37px;color:#8c8c8c;-webkit-text-stroke:0.22px #8c8c8c;">0 resolved</div>
<div class="t" style="left:1663.7px;top:1472.5px;font-size:22.0px;line-height:28px;letter-spacing:0.37px;color:#e2e2e2;-webkit-text-stroke:0.22px #e2e2e2;">6 ongoing</div>
<div class="t" style="left:1781.7px;top:1472.5px;font-size:22.0px;line-height:28px;letter-spacing:0.07px;color:#8c8c8c;-webkit-text-stroke:0.22px #8c8c8c;">0 rare</div>
<div class="t" style="left:2003.6px;top:1454.5px;font-size:23.5px;line-height:29px;letter-spacing:0.09px;color:#e8e8e8;-webkit-text-stroke:0.24px #e8e8e8;">Triage results</div>
<div class="t" style="left:2234.6px;top:1454.5px;font-size:23.5px;line-height:29px;letter-spacing:-0.02px;color:#e8e8e8;-webkit-text-stroke:0.24px #e8e8e8;">Explore logs</div>
<div class="t" style="left:189.0px;top:1575.0px;font-size:24.6px;line-height:31px;letter-spacing:1.33px;color:#efefef;-webkit-text-stroke:0.25px #efefef;">etcd-cluster</div>
<div class="t" style="left:834.8px;top:1575.0px;font-size:24.5px;line-height:31px;letter-spacing:0.94px;color:#efefef;-webkit-text-stroke:0.24px #efefef;">Manual</div>
<div class="t" style="left:1180.4px;top:1558.0px;font-size:24.5px;line-height:31px;letter-spacing:0.57px;color:#efefef;-webkit-text-stroke:0.24px #efefef;">Today</div>
<div class="t" style="left:1181.5px;top:1595.5px;font-size:22.5px;line-height:28px;letter-spacing:0.82px;color:#c8c8c8;-webkit-text-stroke:0.23px #c8c8c8;">3:30pm</div>
<div class="t" style="left:1407.0px;top:1559.5px;font-size:23.5px;line-height:29px;letter-spacing:0.75px;color:#e2e2e2;-webkit-text-stroke:0.24px #e2e2e2;">Completed</div>
<div class="t" style="left:1392.9px;top:1594.5px;font-size:23.0px;line-height:29px;letter-spacing:1.31px;color:#dcdcdc;-webkit-text-stroke:0.23px #dcdcdc;">2h 30m</div>
<div class="t" style="left:1664.7px;top:1558.5px;font-size:22.0px;line-height:28px;letter-spacing:0.37px;color:#8c8c8c;-webkit-text-stroke:0.22px #8c8c8c;">0 new</div>
<div class="t" style="left:1779.9px;top:1558.5px;font-size:22.0px;line-height:28px;letter-spacing:0.46px;color:#8c8c8c;-webkit-text-stroke:0.22px #8c8c8c;">0 resolved</div>
<div class="t" style="left:1663.7px;top:1593.5px;font-size:22.0px;line-height:28px;letter-spacing:0.20px;color:#e2e2e2;-webkit-text-stroke:0.22px #e2e2e2;">7 ongoing</div>
<div class="t" style="left:1779.9px;top:1593.5px;font-size:22.0px;line-height:28px;letter-spacing:0.21px;color:#8c8c8c;-webkit-text-stroke:0.22px #8c8c8c;">0 rare</div>
<div class="t" style="left:2003.6px;top:1576.5px;font-size:23.5px;line-height:29px;letter-spacing:0.09px;color:#e8e8e8;-webkit-text-stroke:0.24px #e8e8e8;">Triage results</div>
<div class="t" style="left:2234.6px;top:1576.5px;font-size:23.5px;line-height:29px;letter-spacing:-0.02px;color:#e8e8e8;-webkit-text-stroke:0.24px #e8e8e8;">Explore logs</div>
</div></body></html>
